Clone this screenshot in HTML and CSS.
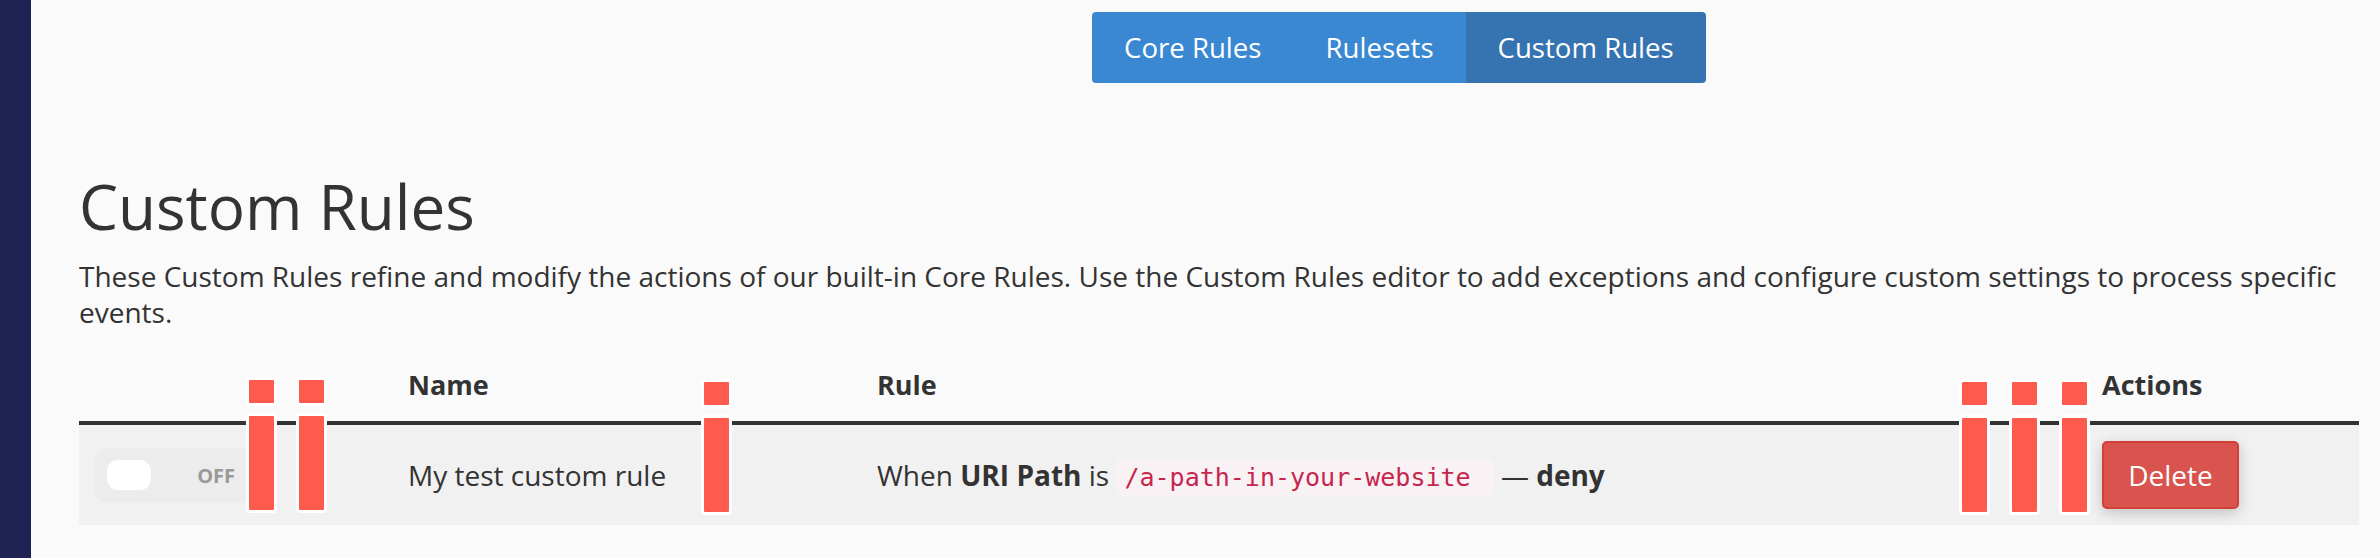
FILE: index.html
```html
<!DOCTYPE html>
<html lang="en">
<head>
    <meta charset="UTF-8">
    <meta name="viewport" content="width=device-width, initial-scale=1.0">
    <title>Custom Rules</title>
    <link rel="stylesheet" href="styles.css">
</head>
<body>
    <div class="layout">
        <aside class="sidebar"></aside>

        <main class="content">
            <nav class="tabs">
                <a class="tab" href="#">Core Rules</a>
                <a class="tab" href="#">Rulesets</a>
                <a class="tab active" href="#">Custom Rules</a>
            </nav>

            <h1>Custom Rules</h1>
            <p class="intro">These Custom Rules refine and modify the actions of our built-in Core Rules. Use the Custom Rules editor to add exceptions and configure custom settings to process specific events.</p>

            <div class="rules">
                <table class="rules-table">
                    <colgroup>
                        <col class="col-toggle">
                        <col class="col-name">
                        <col class="col-rule">
                        <col class="col-actions">
                    </colgroup>
                    <thead>
                        <tr>
                            <th></th>
                            <th>Name</th>
                            <th>Rule</th>
                            <th>Actions</th>
                        </tr>
                    </thead>
                    <tbody>
                        <tr>
                            <td>
                                <label class="switch">
                                    <span class="switch-knob"></span>
                                    <span class="switch-label">OFF</span>
                                </label>
                            </td>
                            <td>My test custom rule</td>
                            <td>When <b>URI Path</b> is <code>/a-path-in-your-website </code> &mdash; <b>deny</b></td>
                            <td><button class="btn-delete">Delete</button></td>
                        </tr>
                    </tbody>
                </table>

                <!-- column markers -->
                <span class="marker marker-1"><span class="marker-dot"></span><span class="marker-stem"></span></span>
                <span class="marker marker-2"><span class="marker-dot"></span><span class="marker-stem"></span></span>
                <span class="marker marker-3"><span class="marker-dot"></span><span class="marker-stem"></span></span>
                <span class="marker marker-4"><span class="marker-dot"></span><span class="marker-stem"></span></span>
                <span class="marker marker-5"><span class="marker-dot"></span><span class="marker-stem"></span></span>
                <span class="marker marker-6"><span class="marker-dot"></span><span class="marker-stem"></span></span>
            </div>
        </main>
    </div>
</body>
</html>
```

FILE: styles.css
```css
body {
    margin: 0;
    font-family: 'Open Sans', 'Noto Sans', sans-serif;
    background-color: #fafafa;
    color: #333;
    overflow: hidden;
}

.layout {
    display: flex;
    min-height: 558px;
}

.sidebar {
    flex: 0 0 31px;
    background: #1f2354;
}

.content {
    flex: 1;
    padding: 12px 21px 0 48px;
}

/* top tab switcher */
.tabs {
    display: flex;
    width: max-content;
    margin-left: 1013px;
    border-radius: 4px;
    overflow: hidden;
}

.tab {
    display: block;
    padding: 0 32px;
    height: 71px;
    line-height: 71px;
    font-size: 27.6px;
    color: #fff;
    text-decoration: none;
    background: #3a88d2;
}

.tab.active {
    background: #3574b0;
}

h1 {
    margin: 84px 0 0;
    font-size: 62px;
    font-weight: 400;
    line-height: 79px;
}

.intro {
    margin: 12px -21px 0 0;
    font-size: 28px;
    line-height: 36px;
}

/* rules table */
.rules {
    position: relative;
    margin-top: 27px;
}

.rules-table {
    width: 100%;
    table-layout: fixed;
    border-collapse: separate;
    border-spacing: 0;
    font-size: 28px;
}

.col-toggle { width: 313px; }
.col-name { width: 469px; }
.col-actions { width: 273px; }

.rules-table th {
    padding: 8px 16px 16px;
    font-size: 27px;
    font-weight: 700;
    line-height: 40px;
    text-align: left;
    border-bottom: 4px solid #333;
}

.rules-table td {
    height: 100px;
    padding: 0 16px;
    background: #f1f1f1;
    vertical-align: middle;
    white-space: nowrap;
}

.rules-table b {
    font-weight: 700;
}

.rules-table code {
    font-family: 'DejaVu Sans Mono', 'Liberation Mono', monospace;
    font-size: 25px;
    color: #c7254e;
    background: #f9f2f4;
    padding: 4px 8px;
    border-radius: 6px;
    white-space: pre;
}

/* on/off switch */
.switch {
    display: flex;
    align-items: center;
    justify-content: space-between;
    width: 160px;
    height: 55px;
    padding: 0 20px 0 12px;
    box-sizing: border-box;
    background: #ececec;
    border-radius: 12px;
}

.switch-knob {
    width: 44px;
    height: 30px;
    background: #fff;
    border-radius: 11px;
}

.switch-label {
    font-size: 20px;
    font-weight: 700;
    color: #999;
}

.btn-delete {
    display: block;
    width: 137px;
    height: 68px;
    font-family: inherit;
    font-size: 28px;
    color: #fff;
    background: #d9534f;
    border: 2px solid #d43f3a;
    border-radius: 5px;
    box-shadow: 0 4px 14px rgba(0, 0, 0, 0.2);
    cursor: pointer;
}

/* markers over the column edges */
.marker {
    position: absolute;
    top: 20px;
    display: flex;
    flex-direction: column;
    gap: 7px;
}

.marker-dot,
.marker-stem {
    display: block;
    width: 25px;
    background: #ff5a4e;
    border: 3px solid #fff;
    border-radius: 4px;
}

.marker-dot { height: 23px; }
.marker-stem { height: 94px; }

.marker-1 { left: 167px; }
.marker-2 { left: 217px; }
.marker-3 { left: 622px; top: 22px; }
.marker-4 { left: 1880px; top: 22px; }
.marker-5 { left: 1930px; top: 22px; }
.marker-6 { left: 1980px; top: 22px; }
```
